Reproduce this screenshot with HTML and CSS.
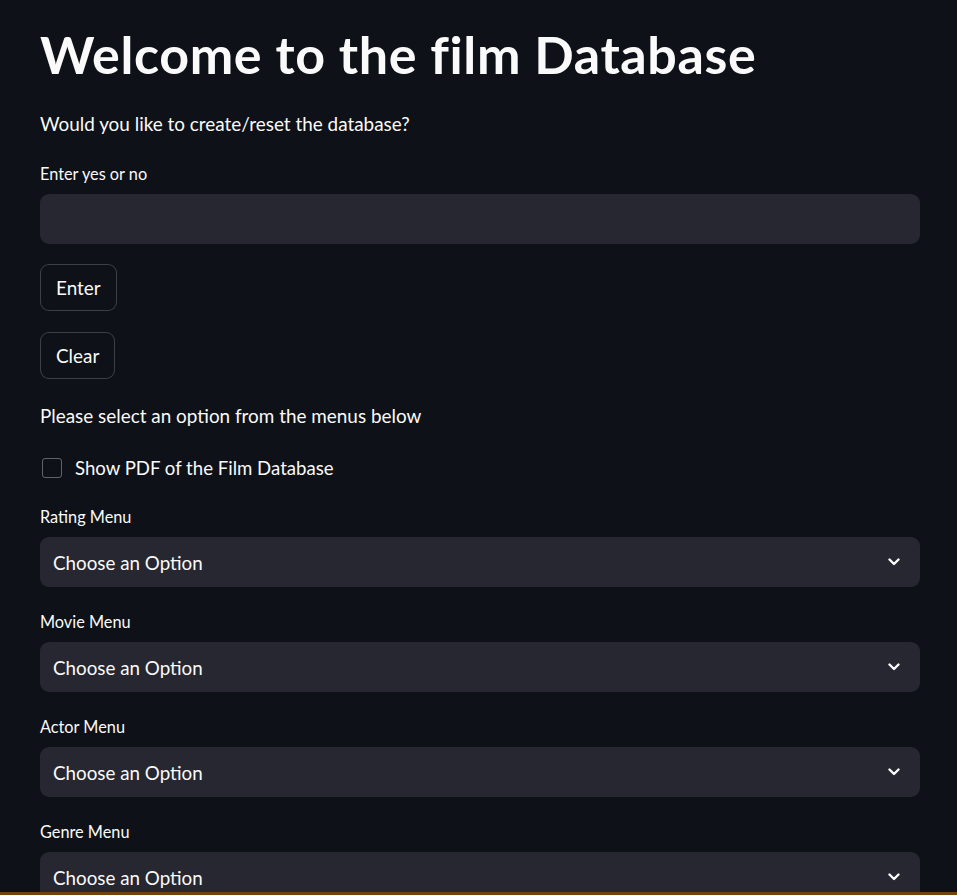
FILE: index.html
```html
<!DOCTYPE html>
<html lang="en">
<head>
<meta charset="utf-8">
<title>Welcome to the film Database</title>
<link rel="stylesheet" href="styles.css">
</head>
<body>
<main class="main">
  <h1 class="title">Welcome to the film Database</h1>
  <p class="text q">Would you like to create/reset the database?</p>
  <label class="label lbl-input">Enter yes or no</label>
  <div class="input"></div>
  <div class="btn-row first"><button class="btn">Enter</button></div>
  <div class="btn-row second"><button class="btn">Clear</button></div>
  <p class="text sel">Please select an option from the menus below</p>
  <div class="check-row">
    <span class="checkbox"></span>
    <span class="check-label">Show PDF of the Film Database</span>
  </div>

  <div class="field field-first">
    <label class="label">Rating Menu</label>
    <div class="select"><span class="sel-text">Choose an Option</span>
      <svg class="chev" viewBox="0 0 12 8" width="12" height="8"><path d="M1.5 1.5 L6 6 L10.5 1.5" fill="none" stroke="#fafafa" stroke-width="2.4" stroke-linecap="round" stroke-linejoin="round"/></svg>
    </div>
  </div>
  <div class="field">
    <label class="label">Movie Menu</label>
    <div class="select"><span class="sel-text">Choose an Option</span>
      <svg class="chev" viewBox="0 0 12 8" width="12" height="8"><path d="M1.5 1.5 L6 6 L10.5 1.5" fill="none" stroke="#fafafa" stroke-width="2.4" stroke-linecap="round" stroke-linejoin="round"/></svg>
    </div>
  </div>
  <div class="field">
    <label class="label">Actor Menu</label>
    <div class="select"><span class="sel-text">Choose an Option</span>
      <svg class="chev" viewBox="0 0 12 8" width="12" height="8"><path d="M1.5 1.5 L6 6 L10.5 1.5" fill="none" stroke="#fafafa" stroke-width="2.4" stroke-linecap="round" stroke-linejoin="round"/></svg>
    </div>
  </div>
  <div class="field">
    <label class="label">Genre Menu</label>
    <div class="select"><span class="sel-text">Choose an Option</span>
      <svg class="chev" viewBox="0 0 12 8" width="12" height="8"><path d="M1.5 1.5 L6 6 L10.5 1.5" fill="none" stroke="#fafafa" stroke-width="2.4" stroke-linecap="round" stroke-linejoin="round"/></svg>
    </div>
  </div>
</main>
<div class="bottom-bar"></div>
</body>
</html>
```
FILE: styles.css
```css
html, body {
  margin: 0;
  padding: 0;
  background: #0e1117;
  color: #fafafa;
  font-family: Lato, "Source Sans Pro", "Noto Sans", sans-serif;
  overflow: hidden;
  height: 895px;
}
.main {
  width: 880px;
  padding-left: 40px;
  display: flex;
  flex-direction: column;
  align-items: stretch;
}
.title {
  margin: 0;
  padding-top: 22px;
  font-size: 52px;
  line-height: 64px;
  font-weight: 700;
  letter-spacing: 0.6px;
}
.text {
  margin: 0;
  font-size: 18.9px;
  line-height: 28px;
}
.q { margin-top: 24px; }
.label {
  display: block;
  font-size: 16.3px;
  line-height: 22px;
}
.lbl-input { margin-top: 25px; }
.input {
  margin-top: 9px;
  height: 50px;
  border-radius: 9px;
  background: #262730;
}
.btn-row { display: flex; }
.btn-row.first { margin-top: 20px; }
.btn-row.second { margin-top: 21px; }
.btn {
  height: 47px;
  padding: 0 15px;
  background: #0e1117;
  color: #fafafa;
  border: 1px solid rgba(250, 250, 250, 0.2);
  border-radius: 9px;
  font-family: inherit;
  font-size: 18.9px;
}
.sel { margin-top: 23px; }
.check-row {
  margin-top: 24px;
  height: 28px;
  display: flex;
  align-items: center;
  gap: 13px;
  padding-left: 2px;
}
.checkbox {
  width: 18px;
  height: 18px;
  border: 1px solid rgba(250, 250, 250, 0.35);
  border-radius: 3px;
}
.check-label {
  font-size: 18.6px;
  line-height: 28px;
}
.field {
  display: flex;
  flex-direction: column;
  margin-top: 24px;
}
.field-first { margin-top: 24px; }
.select {
  margin-top: 9px;
  height: 50px;
  border-radius: 9px;
  background: #262730;
  display: flex;
  align-items: center;
  justify-content: space-between;
  padding: 0 20px 0 13px;
}
.sel-text {
  font-size: 18.8px;
}
.chev { display: block; }
.bottom-bar {
  position: fixed;
  left: 0;
  right: 0;
  bottom: 0;
  height: 3px;
  background: #6e4512;
}
```
